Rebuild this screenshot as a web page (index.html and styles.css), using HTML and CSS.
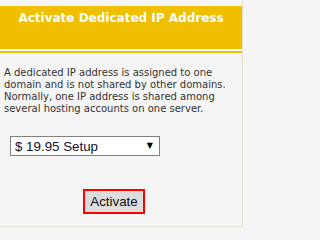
FILE: index.html
```html
<!DOCTYPE html>
<html>
<head>
<meta charset="utf-8">
<link rel="stylesheet" href="styles.css">
</head>
<body>
<div class="panel">
  <div class="header"><h1 class="title">Activate Dedicated IP Address</h1></div>
  <div class="rule"></div>
  <p class="desc">A dedicated IP address is assigned to one<br>domain and is not shared by other domains.<br>Normally, one IP address is shared among<br>several hosting accounts on one server.</p>
  <div class="field">
    <div class="select-wrap">
      <select class="select"><option>$ 19.95 Setup</option></select>
      <span class="arrow">▼</span>
    </div>
  </div>
  <div class="actions">
    <button class="btn" type="button">Activate</button>
  </div>
</div>
</body>
</html>
```
FILE: styles.css
```css
html, body {
  margin: 0;
  padding: 0;
  background: #f5f5f5;
}
.panel {
  width: 243px;
  height: 227px;
  box-sizing: border-box;
  border-right: 1px solid #e6e1cf;
  border-bottom: 1px solid #e6e1cf;
  padding-top: 6px;
  display: flex;
  flex-direction: column;
}
.header {
  background: #efbf00;
  height: 43px;
  border-bottom: 2px solid #ffffff;
}
.title {
  margin: 0;
  padding-top: 4px;
  text-align: center;
  color: #ffffff;
  font-family: "DejaVu Sans", Verdana, sans-serif;
  font-weight: bold;
  font-size: 12px;
  line-height: 16px;
}
.rule {
  height: 2px;
  background: #efbf00;
}
.desc {
  margin: 14px 0 0 4px;
  font-family: "DejaVu Sans", Verdana, sans-serif;
  font-size: 10px;
  line-height: 12px;
  color: #333333;
  white-space: nowrap;
}
.field {
  padding: 21px 0 0 10px;
}
.select-wrap {
  position: relative;
  width: 150px;
  height: 20px;
}
.select {
  -webkit-appearance: none;
  appearance: none;
  width: 150px;
  height: 20px;
  margin: 0;
  box-sizing: border-box;
  border: 1px solid #808080;
  border-radius: 0;
  background: #ffffff;
  padding: 0 0 0 4px;
  font-family: "Liberation Sans", Arial, sans-serif;
  font-size: 13.33px;
  color: #10103a;
}
.arrow {
  position: absolute;
  right: 7px;
  top: 4px;
  font-size: 8px;
  line-height: 12px;
  color: #000;
  font-family: "DejaVu Sans", sans-serif;
  pointer-events: none;
}
.actions {
  padding: 33px 0 0 83px;
}
.btn {
  margin: 0;
  height: 25px;
  width: 62px;
  box-sizing: border-box;
  border: 2px solid #ff0000;
  border-radius: 0;
  background: #dddddd;
  padding: 0;
  font-family: "Liberation Sans", Arial, sans-serif;
  font-size: 13.33px;
  color: #111111;
}
```
